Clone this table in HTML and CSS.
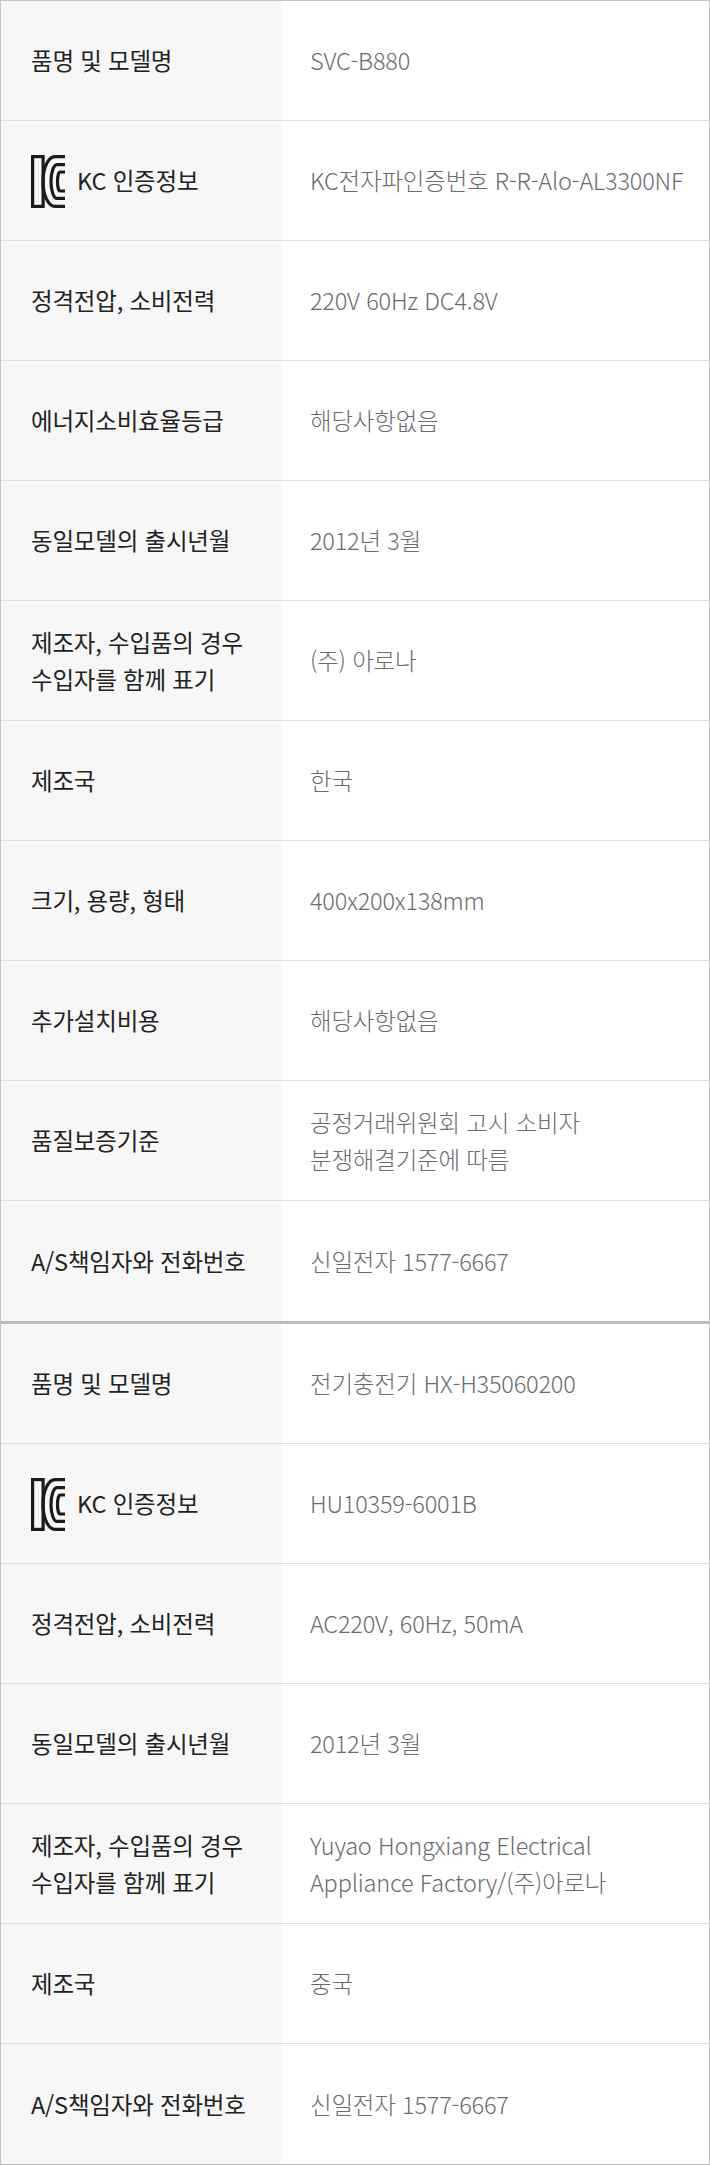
FILE: index.html
```html
<!DOCTYPE html>
<html lang="ko">
<head>
<meta charset="utf-8">
<title>상품정보</title>
<link rel="stylesheet" href="styles.css">
</head>
<body>
<div class="spec">
  <section class="table">
    <div class="row"><div class="th">품명 및 모델명</div><div class="td">SVC-B880</div></div>
    <div class="row"><div class="th kc"><svg class="kc-mark" viewBox="0 0 34 53" aria-hidden="true"><rect x="1.6" y="1.6" width="10.5" height="49.8" fill="none" stroke="#1a1a1a" stroke-width="3.2"/><path d="M34 1.6 H24 A12 24.9 0 0 0 24 51.4 H34 M34 9.6 H26 A6 16.9 0 0 0 26 43.4 H34" fill="none" stroke="#1a1a1a" stroke-width="3.2"/><path d="M34 17 H29 A2.5 9.5 0 0 0 29 36 H34" fill="none" stroke="#1a1a1a" stroke-width="3.2"/></svg><span>KC 인증정보</span></div><div class="td">KC전자파인증번호 R-R-Alo-AL3300NF</div></div>
    <div class="row"><div class="th">정격전압, 소비전력</div><div class="td">220V 60Hz DC4.8V</div></div>
    <div class="row"><div class="th">에너지소비효율등급</div><div class="td">해당사항없음</div></div>
    <div class="row"><div class="th">동일모델의 출시년월</div><div class="td">2012년 3월</div></div>
    <div class="row"><div class="th">제조자, 수입품의 경우<br>수입자를 함께 표기</div><div class="td">(주) 아로나</div></div>
    <div class="row"><div class="th">제조국</div><div class="td">한국</div></div>
    <div class="row"><div class="th">크기, 용량, 형태</div><div class="td">400x200x138mm</div></div>
    <div class="row"><div class="th">추가설치비용</div><div class="td">해당사항없음</div></div>
    <div class="row"><div class="th">품질보증기준</div><div class="td">공정거래위원회 고시 소비자<br>분쟁해결기준에 따름</div></div>
    <div class="row"><div class="th">A/S책임자와 전화번호</div><div class="td">신일전자 1577-6667</div></div>
  </section>
  <section class="table">
    <div class="row"><div class="th">품명 및 모델명</div><div class="td">전기충전기 HX-H35060200</div></div>
    <div class="row"><div class="th kc"><svg class="kc-mark" viewBox="0 0 34 53" aria-hidden="true"><rect x="1.6" y="1.6" width="10.5" height="49.8" fill="none" stroke="#1a1a1a" stroke-width="3.2"/><path d="M34 1.6 H24 A12 24.9 0 0 0 24 51.4 H34 M34 9.6 H26 A6 16.9 0 0 0 26 43.4 H34" fill="none" stroke="#1a1a1a" stroke-width="3.2"/><path d="M34 17 H29 A2.5 9.5 0 0 0 29 36 H34" fill="none" stroke="#1a1a1a" stroke-width="3.2"/></svg><span>KC 인증정보</span></div><div class="td">HU10359-6001B</div></div>
    <div class="row"><div class="th">정격전압, 소비전력</div><div class="td">AC220V, 60Hz, 50mA</div></div>
    <div class="row"><div class="th">동일모델의 출시년월</div><div class="td">2012년 3월</div></div>
    <div class="row"><div class="th">제조자, 수입품의 경우<br>수입자를 함께 표기</div><div class="td">Yuyao Hongxiang Electrical<br>Appliance Factory/(주)아로나</div></div>
    <div class="row"><div class="th">제조국</div><div class="td">중국</div></div>
    <div class="row"><div class="th">A/S책임자와 전화번호</div><div class="td">신일전자 1577-6667</div></div>
  </section>
</div>
</body>
</html>
```
FILE: styles.css
```css
html, body {
  margin: 0;
  padding: 0;
  background: #fff;
}
body {
  font-family: "Noto Sans CJK KR", "Noto Sans", sans-serif;
}
.spec {
  width: 710px;
  box-sizing: border-box;
  border: 1px solid #c4c4c4;
}
.table {
  display: flex;
  flex-direction: column;
}
.table + .table {
  border-top: 3px solid #bbbbbb;
}
.row {
  display: grid;
  grid-template-columns: 280px 1fr;
  height: 119px;
  border-bottom: 1px solid #dddddd;
}
.table:first-child .row:last-child,
.table:last-child .row:last-child {
  border-bottom: none;
  height: 120px;
}
.th, .td {
  display: flex;
  flex-direction: column;
  justify-content: center;
  padding-left: 30px;
  font-size: 23.5px;
  line-height: 1.56;
  letter-spacing: -0.2px;
}
.th {
  background: #f7f7f7;
  color: #222;
  font-weight: 400;
}
.td {
  font-family: "Noto Sans CJK KR Light", "Noto Sans CJK KR DemiLight", "Noto Sans CJK KR", "Noto Sans", sans-serif;
  color: #6b6b6b;
  font-weight: 300;
  padding-left: 29px;
}
.th.kc {
  flex-direction: row;
  align-items: center;
  justify-content: flex-start;
  gap: 12px;
}
.kc-mark {
  width: 34px;
  height: 53px;
  flex: none;
  margin-top: 2px;
}
```
